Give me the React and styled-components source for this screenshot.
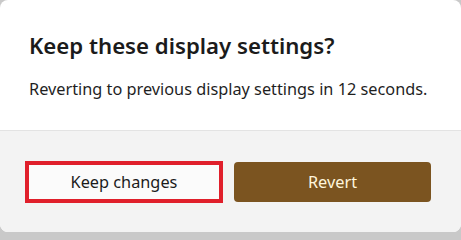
import React from 'react';
import styled, { createGlobalStyle } from 'styled-components';

const Global = createGlobalStyle`
  html, body {
    margin: 0;
    padding: 0;
    background: #c9c9c9;
  }
  body {
    font-family: "Noto Sans", "Open Sans", sans-serif;
  }
`

const Dialog = styled.div`
  width: 461px;
  height: 232px;
  display: flex;
  flex-direction: column;
  background: #ffffff;
  border-radius: 8px;
  overflow: hidden;
`

const Content = styled.div`
  height: 131px;
  padding: 30px 29px 0;
  box-sizing: border-box;
  border-bottom: solid 1px #e3e3e3;
`

const Title = styled.h1`
  margin: 0;
  font-size: 22.2px;
  font-weight: 600;
  line-height: 32px;
  color: #1b1b1b;
`

const Message = styled.p`
  margin: 16px 0 0;
  font-size: 16.3px;
  line-height: 22px;
  color: #1f1f1f;
`

const Footer = styled.div`
  flex: 1;
  display: grid;
  grid-template-columns: 198px 1fr;
  gap: 11px;
  align-items: center;
  padding: 0 30px 0 25px;
  background: #f3f3f3;
`

const Button = styled.button`
  font-family: inherit;
  font-size: 16.3px;
  border-radius: 4px;
  cursor: pointer;
  height: ${p => (p.$primary ? '40px' : '42px')};
  background: ${p => (p.$primary ? '#7b5420' : '#fbfbfb')};
  color: ${p => (p.$primary ? '#fff6dc' : '#1b1b1b')};
  border: ${p => (p.$highlight ? 'solid 4px #e01f2b' : 'none')};
  ${p => p.$highlight && 'border-radius: 0;'}
`

export default function App() {
  return (
    <>
      <Global />
      <Dialog>
        <Content>
          <Title>Keep these display settings?</Title>
          <Message>Reverting to previous display settings in 12 seconds.</Message>
        </Content>
        <Footer>
          <Button $highlight>Keep changes</Button>
          <Button $primary>Revert</Button>
        </Footer>
      </Dialog>
    </>
  );
}
